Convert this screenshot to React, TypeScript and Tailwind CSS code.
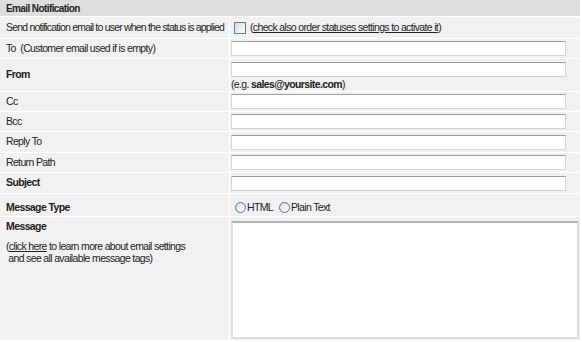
import React from 'react'

const font = { fontFamily: '"Liberation Sans", Arial, sans-serif' }

function Field() {
  return <div className="h-[15px] w-[335px] bg-white border border-[#d4d4d4] border-t-[#9c9c9c]" />
}

function Row({
  label,
  bold = false,
  h = 'h-[19px]',
  children,
}: {
  label: React.ReactNode
  bold?: boolean
  h?: string
  children?: React.ReactNode
}) {
  return (
    <div className={`flex ${h} gap-px`}>
      <div
        className={`w-[229px] shrink-0 bg-[#f1f1f1] pl-[6px] flex items-center whitespace-nowrap ${bold ? 'font-bold tracking-[-0.6px]' : ''}`}
      >
        {label}
      </div>
      <div className="flex-1 bg-[#f1f1f1] pl-[1px] flex items-center">{children}</div>
    </div>
  )
}

function Radio({ label }: { label: string }) {
  return (
    <span className="flex items-center gap-[1px]">
      <span className="inline-block w-[11px] h-[11px] rounded-full border border-[#4a76a8] bg-gradient-to-br from-[#dcdcd4] to-white" />
      <span>{label}</span>
    </span>
  )
}

export default function App() {
  return (
    <div
      className="w-[582px] h-[342px] bg-white text-[10.5px] tracking-[-0.65px] text-[#222] overflow-hidden"
      style={font}
    >
      <div className="w-[580px] flex flex-col gap-px">
        <div className="h-[16px] bg-[#dedede] pl-[6px] flex items-center font-bold text-[10px] tracking-[-0.6px]">
          Email Notification
        </div>

        <Row
          label={<span className="tracking-[-0.8px]">Send notification email to user when the status is applied</span>}
          h="h-[21px]"
        >
          <div className="flex items-center whitespace-nowrap">
            <span className="inline-block w-[12px] h-[12px] ml-[3px] border border-[#5a7ea8] bg-gradient-to-br from-[#dcdcd4] to-white" />
            <span className="ml-[4px]">
              (<span className="underline">check also order statuses settings to activate it</span>)
            </span>
          </div>
        </Row>

        <Row label={<span>To&nbsp; (Customer email used if is empty)</span>} h="h-[19px]">
          <Field />
        </Row>

        <div className="flex h-[32px] gap-px">
          <div className="w-[229px] shrink-0 bg-[#f1f1f1] pl-[6px] flex items-center font-bold tracking-[-0.6px]">From</div>
          <div className="flex-1 bg-[#f1f1f1] pl-[1px] pt-[3px] flex flex-col gap-px">
            <Field />
            <div className="leading-[12px]">
              (e.g. <span className="font-bold tracking-[-0.6px]">sales@yoursite.com</span>)
            </div>
          </div>
        </div>

        <Row label="Cc">
          <Field />
        </Row>
        <Row label="Bcc">
          <Field />
        </Row>
        <Row label="Reply To" h="h-[20px]">
          <Field />
        </Row>
        <Row label="Return Path">
          <Field />
        </Row>
        <Row label="Subject" bold h="h-[20px]">
          <Field />
        </Row>
        <div className="flex h-[22px] gap-px">
          <div className="w-[229px] shrink-0 bg-[#f1f1f1] pl-[6px] pt-[7px] font-bold tracking-[-0.6px] leading-[12px]">
            Message Type
          </div>
          <div className="flex-1 bg-[#f1f1f1] pt-[7px]">
            <div className="flex items-center gap-[6px] ml-[5px] leading-[12px]">
              <Radio label="HTML" />
              <Radio label="Plain Text" />
            </div>
          </div>
        </div>

        <div className="flex h-[123px] gap-px">
          <div className="w-[229px] shrink-0 bg-[#f1f1f1] pl-[6px] pt-[3px] leading-[12px]">
            <div className="font-bold tracking-[-0.6px]">Message</div>
            <div className="mt-[8px]">
              (<span className="underline">click here</span> to learn more about email settings
              <br />
              &nbsp;and see all available message tags)
            </div>
          </div>
          <div className="flex-1 bg-[#f1f1f1] pl-[1px] pt-[4px]">
            <div className="w-[348px] h-[118px] bg-white border-[2px] border-[#dedede] border-t-[#b4b4b4]" />
          </div>
        </div>
      </div>
    </div>
  )
}
